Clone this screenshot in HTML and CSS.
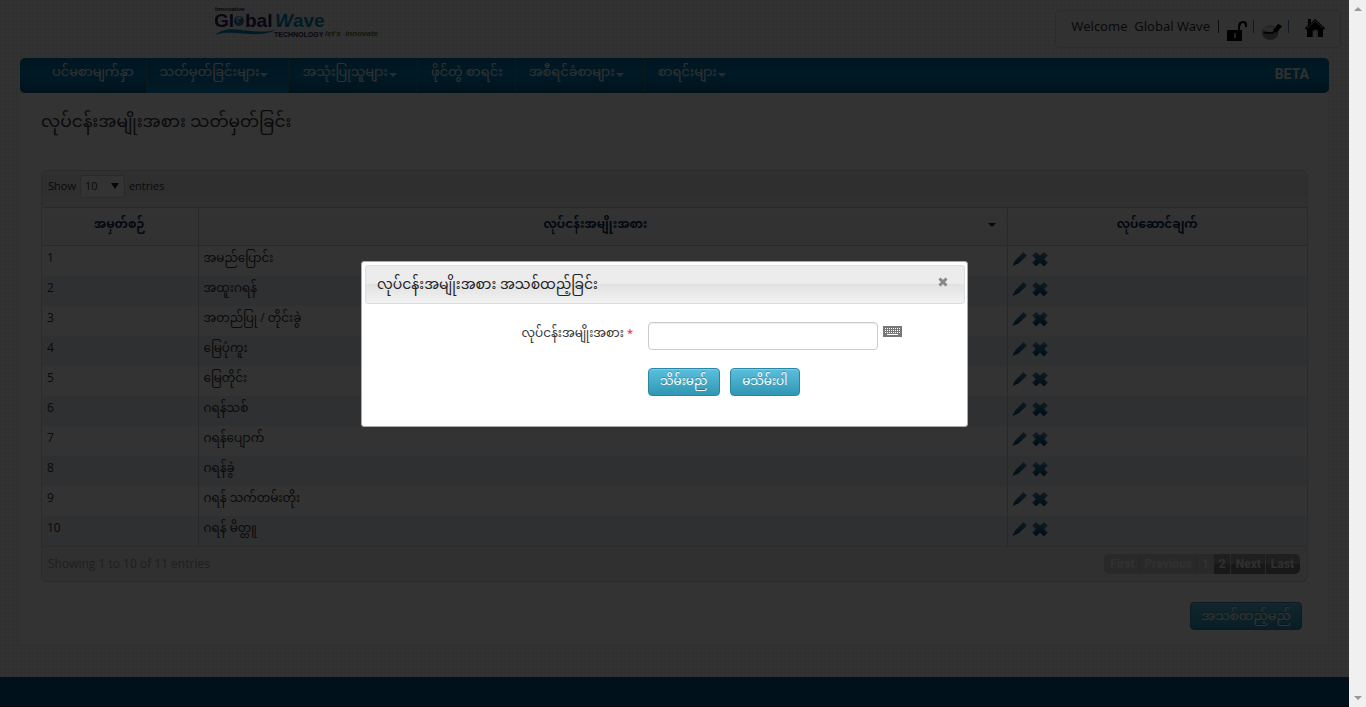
FILE: index.html
```
<!DOCTYPE html>
<html lang="my">
<head>
<meta charset="utf-8">
<title>Global Wave Technology</title>
<link rel="stylesheet" href="styles.css">
</head>
<body>
<svg class="defs" width="0" height="0" aria-hidden="true">
  <defs>
    <linearGradient id="blue" x1="0" y1="0" x2="0" y2="1"><stop offset="0" stop-color="#4387ab"/><stop offset="1" stop-color="#04466b"/></linearGradient>
    <symbol id="pencil" viewBox="0 0 16 16"><path fill="url(#blue)" d="M11.500 1 15 4.500 6.500 12.500 2 14.300 1 15 .8 13.800 3.500 9z"/></symbol>
    <symbol id="cross" viewBox="0 0 16 16"><path fill="url(#blue)" d="M4 1.500 8 5l4-3.500L15 4.500 11.700 8 15 11.500 12 15 8 11.300 4 15 1 11.500 4.300 8 1 4.500z" stroke="url(#blue)" stroke-linejoin="round"/></symbol>
  </defs>
</svg>
<div class="window">
  <div class="page">
    <header class="top">
      <a class="logo" href="#" aria-label="Innovative Global Wave Technology">
        <svg width="168" height="36" viewBox="0 0 168 36">
          <g font-family="Liberation Sans, sans-serif" font-weight="700">
            <text x="0" y="7" font-size="6" fill="#1c1c55">Innovative</text>
            <text x="-1" y="23" font-size="19" fill="#25235e">Gl</text>
            <text x="30" y="23" font-size="19" fill="#25235e">bal</text>
            <text x="60" y="23" font-size="19" fill="#0082bd"><tspan font-style="italic">W</tspan>ave</text>
            <text x="59" y="33" font-size="7" fill="#25235e">TECHNOLOGY</text>
            <text x="110" y="32" font-size="8" fill="#52841a" font-style="italic">let's&#160; innovate</text>
          </g>
          <circle cx="24" cy="17" r="5" fill="#347ba8"/>
          <path d="M21 15q3-3 5-1-4 0-3 5" fill="none" stroke="#fff"/>
          <path d="M0 31C16 18 34 32 61 26 41 36 19 24 0 31Z" fill="#0082bd"/>
        </svg>
      </a>
      <div class="account">
        <span class="welcome">Welcome&nbsp; Global Wave</span>
        <span class="bar bar-purple"></span>
        <a href="#" aria-label="Log out"><svg class="drop" width="20" height="20" viewBox="0 0 20 20"><path d="M0 9h11V6q0-6 5-6t4 6h-2q0-4-2-4t-3 4v3h2v11H0z"/><path d="M7 12h2v5H7z" fill="#aaa"/></svg></a>
        <span class="bar"></span>
        <a href="#" aria-label="Change password"><svg class="drop" width="20" height="20" viewBox="0 0 22 20"><ellipse cx="9" cy="12" rx="9" ry="8" fill="#888"/><ellipse cx="9" cy="8" rx="7" ry="3" fill="#ddd"/><path d="m12 9 6-7 4 3-6 7z"/><path d="M2 12h10l3-3" fill="none" stroke="#111" stroke-width="2"/></svg></a>
        <span class="bar"></span>
        <a class="home" href="#" aria-label="Home"><svg width="20" height="20" viewBox="0 0 20 20"><path d="M3 2h3v4l4-4 10 9-1 2-1-1v8h-5v-6q-2-3-5 0v6H2v-8l-1 1-1-2 3-3z"/><path d="m2 11 8-7 8 7M8 20v-6h4v6" fill="none" stroke="#aaa"/></svg></a>
      </div>
    </header>

    <nav class="nav">
      <a class="nav-home" href="#">ပင်မစာမျက်နှာ</a>
      <a class="active drop-down" href="#">သတ်မှတ်ခြင်းများ</a>
      <a class="drop-down" href="#">အသုံးပြုသူများ</a>
      <a href="#">ဖိုင်တွဲ စာရင်း</a>
      <a class="drop-down" href="#">အစီရင်ခံစာများ</a>
      <a class="drop-down" href="#">စာရင်းများ</a>
      <strong>BETA</strong>
    </nav>

    <main class="panel">
      <h1>လုပ်ငန်းအမျိုးအစား သတ်မှတ်ခြင်း</h1>
      <section class="grid">
        <div class="tools">
          <label for="size">Show</label>
          <span class="size-box"><select id="size"><option>10</option></select></span>
          <span>entries</span>
        </div>
        <table>
          <colgroup><col class="c-no"><col><col class="c-act"></colgroup>
          <thead><tr><th>အမှတ်စဉ်</th><th class="sorted">လုပ်ငန်းအမျိုးအစား</th><th>လုပ်ဆောင်ချက်</th></tr></thead>
          <tbody id="rows"></tbody>
        </table>
        <div class="foot">
          <span>Showing 1 to 10 of 11 entries</span>
          <div class="pager">
            <button disabled>First</button><button disabled>Previous</button><button disabled>1</button><button>2</button><button>Next</button><button>Last</button>
          </div>
        </div>
      </section>
      <div class="add"><button class="btn">အသစ်ထည့်မည်</button></div>
    </main>
    <footer class="footer"></footer>

    <div class="overlay">
      <form class="dialog" role="dialog" aria-labelledby="dlg">
        <div class="dialog-head">
          <h2 id="dlg">လုပ်ငန်းအမျိုးအစား အသစ်ထည့်ခြင်း</h2>
          <button type="button" class="close" aria-label="Close"><svg width="10" height="10" viewBox="0 0 10 10"><path d="m1.500 1.500 7 7m0-7-7 7" stroke="#888" stroke-width="3"/></svg></button>
        </div>
        <div class="field">
          <label for="type">လုပ်ငန်းအမျိုးအစား <span class="req">*</span></label>
          <input id="type" type="text">
          <svg class="keys" width="19" height="11" viewBox="0 0 19 11"><path fill="#777" d="M0 0h19v11H0z"/><path stroke="#fff" stroke-dasharray="1 1" d="M2 2.500h15M2 4.500h15M2 6.500h15"/><path stroke="#fff" d="M4 8.500h11"/></svg>
        </div>
        <div class="actions">
          <button type="button" class="btn">သိမ်းမည်</button>
          <button type="button" class="btn">မသိမ်းပါ</button>
        </div>
      </form>
    </div>
  </div>
  <div class="scroll" aria-hidden="true"><i class="up"></i><i class="down"></i></div>
</div>
<script src="app.js"></script>
</body>
</html>
```
FILE: app.js
```
const names = ["အမည်ပြောင်း", "အထူးဂရန်", "အတည်ပြု / တိုင်းခွဲ", "မြေပုံကူး", "မြေတိုင်း", "ဂရန်သစ်", "ဂရန်ပျောက်", "ဂရန်ခွဲ", "ဂရန် သက်တမ်းတိုး", "ဂရန် မိတ္တူ"];
const icon = (id, label) => `<a href="#" aria-label="${label}"><svg width="16" height="16"><use href="#${id}"/></svg></a>`;
document.getElementById("rows").innerHTML = names.map((name, i) =>
  `<tr><td>${i + 1}</td><td>${name}</td><td class="act"><div class="row-icons">${icon("pencil", "Edit")}${icon("cross", "Delete")}</div></td></tr>`
).join("");
```
FILE: styles.css
```
* { box-sizing: border-box; }
body { margin: 0; font: 12px/20px "Open Sans", "Noto Sans Myanmar", "Noto Sans", sans-serif; color: #333; }
a { color: inherit; text-decoration: none; }
button, input, select { font: inherit; color: inherit; }
svg { display: block; }
.defs { position: absolute; }
.window { display: flex; min-height: 100vh; }
.page {
  position: relative; flex: 1; min-width: 0; display: flex; flex-direction: column;
  background: radial-gradient(circle at 1px 1px, #ececec 1px, transparent 1px) 0 0 / 4px 4px, #f8f8f8;
}

.top { display: flex; justify-content: space-between; align-items: flex-start; height: 58px; padding: 4px 8px 0 215px; }
.account { display: flex; align-items: flex-start; height: 38px; margin-top: 6px; padding: 6px 15px; border: 1px solid #d5d5d5; border-radius: 4px; background: #f5f5f5; font: 13px/18px "Noto Sans", sans-serif; }
.welcome { margin-right: 3px; }
.account .bar { width: 1px; height: 13px; margin: 3px 8px 0 6px; background: #4a7ab0; }
.account .bar-purple { background: #603060; margin-left: 5px; }
.drop { margin-top: 4px; }
.home { margin-left: 8px; }

.nav { display: flex; height: 35px; margin: 0 20px; border-radius: 5px; overflow: hidden; color: #f5f5f5; background: linear-gradient(#00709f, #0080b8 50%, #005c8a); font-size: 13px; }
.nav a { display: flex; align-items: flex-start; padding: 3px 12px 4px 13px; border-right: 1px solid #3b7c7c; }
.nav .nav-home { padding-left: 32px; }
.nav .active { background: linear-gradient(#006fa6, #0a86c4); }
.nav .drop-down { padding-right: 20px; }
.nav a:nth-child(6) { border: 0; }
.nav .drop-down::after { content: ""; margin: 12px 0 0 1px; border: 4px solid transparent; border-top-color: #ddd; border-bottom: 0; }
.nav strong { margin-left: auto; padding: 6px 20px; font: bold 14px/20px Roboto, sans-serif; color: #eee; }

.panel { margin: 0 20px; padding: 13px 20px 14px; background: #fff; border: 1px solid #f3f3f3; border-top: 0; }
h1 { margin: 0; height: 64px; font-size: 17px; line-height: 30px; font-weight: 400; }
.grid { border: 1px solid #d5d5d5; border-radius: 6px; background: #efefef; overflow: hidden; }
.tools { display: flex; align-items: center; gap: 4px; height: 36px; padding: 0 6px 6px; background: linear-gradient(#eee, #e6e6e6 65%, #f0f0f0 70%); font-size: 11px; }
.size-box { position: relative; }
.size-box::after { content: ""; position: absolute; right: 6px; top: 8px; border: 4px solid transparent; border-top: 6px solid #222; border-bottom: 0; pointer-events: none; }
select { display: block; width: 45px; height: 23px; padding: 0 4px; appearance: none; border: 1px solid #ccc; border-radius: 3px; background: #fff; }
table { width: 100%; border-collapse: collapse; table-layout: fixed; background: #fff; }
.c-no { width: 156px; }
.c-act { width: 300px; }
th { position: relative; height: 38px; padding: 4px 6px; vertical-align: top; line-height: 24px; font-size: 12px; color: #002b55; border-top: 1px solid #ccc; border-bottom: 1px solid #ccc; background: linear-gradient(#fdfdfd, #f5f5f5); }
td { height: 30px; padding: 0 5px; vertical-align: top; line-height: 24px; font-size: 12px; }
td.act { padding-left: 4px; }
th + th, td + td { border-left: 1px solid #ccc; }
tbody tr:nth-child(even) { background: #ecf0f4; }
th.sorted { padding-right: 20px; }
.sorted::after { content: ""; position: absolute; right: 11px; top: 15px; border: 4px solid transparent; border-top-color: #222; border-bottom: 0; }
.row-icons { display: flex; gap: 4px; padding-top: 5px; }
.foot { display: flex; justify-content: space-between; align-items: center; height: 35px; padding: 0 7px 0 6px; border-top: 1px solid #d5d5d5; color: #999; }
.pager { display: flex; border-radius: 5px; overflow: hidden; }
.pager button { height: 20px; padding: 0 4px 0 5px; border: 0; border-left: 1px solid #ccc; font: bold 12px/20px Roboto, sans-serif; color: #eee; background: linear-gradient(#999 50%, #777 50%); }
.pager button:first-child { border: 0; padding-left: 6px; }
.pager button:last-child { padding-right: 6px; }
.pager button:disabled { background: #cacaca; border-color: #b4b4b4; color: #f2f2f2; }
.add { display: flex; justify-content: flex-end; padding: 20px 6px 0; }
.btn { height: 28px; padding: 0 12px 2px 11px; border: 1px solid #2a86a4; border-radius: 4px; color: #fff; background: linear-gradient(#5bc0de, #2f96b4); box-shadow: inset 0 1px 0 rgba(255,255,255,.2); text-shadow: 0 -1px 0 rgba(0,0,0,.25); font-size: 12px; line-height: 20px; white-space: nowrap; }
.add .btn { padding: 0 10px 2px; font-size: 13px; }
.footer { height: 30px; margin-top: auto; background: #00558a; border-bottom: 1px solid #003355; }

.overlay { position: absolute; inset: 0; display: flex; align-items: center; justify-content: center; padding: 0 20px 20px 0; background: rgba(0,0,0,.8); }
.dialog { width: 607px; padding: 3px 2px 30px 3px; background: #fff; border: 1px solid #aaa; border-radius: 3px; }
.dialog-head { display: flex; justify-content: space-between; align-items: flex-start; height: 39px; padding: 0 16px 0 11px; border: 1px solid #ddd; border-radius: 3px; background: linear-gradient(#ececec 50%, #e2e2e2 50%, #f2f2f2); }
h2 { margin: 0; padding-top: 4px; font-size: 14px; line-height: 28px; font-weight: 400; color: #222; }
.close { margin-top: 11px; padding: 0; border: 0; background: none; }
.field { display: grid; grid-template-columns: 268px 230px auto; column-gap: 15px; padding-top: 18px; align-items: start; }
.field label { text-align: right; font-size: 12px; line-height: 22px; }
.req { color: red; font-size: 11px; }
.field input { width: 230px; height: 28px; padding: 4px 6px; border: 1px solid #ccc; border-radius: 4px; box-shadow: inset 0 1px 1px rgba(0,0,0,.075); }
.keys { margin: 4px 0 0 -10px; }
.actions { display: flex; gap: 10px; padding: 18px 0 0 283px; }

.scroll { width: 17px; display: flex; flex-direction: column; justify-content: space-between; align-items: center; padding: 7px 0; background: #f0f0f0; }
.scroll i { border: 4px solid transparent; }
.scroll .up { border-top: 0; border-bottom-color: #999; }
.scroll .down { border-bottom: 0; border-top-color: #999; }
```
